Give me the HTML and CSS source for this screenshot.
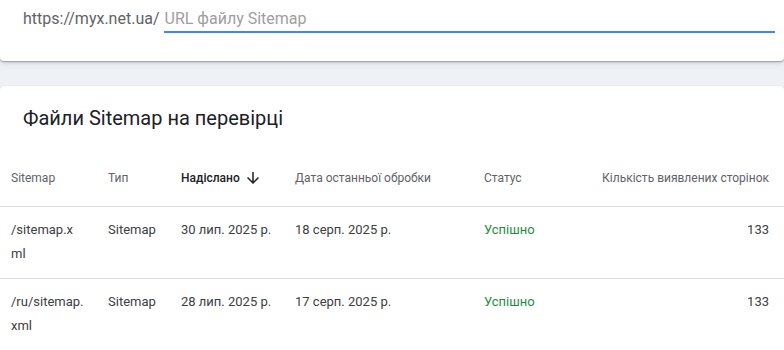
FILE: index.html
```html
<!DOCTYPE html>
<html lang="uk">
<head>
<meta charset="utf-8">
<link rel="stylesheet" href="styles.css">
</head>
<body>
<div class="top-card">
  <div class="url-row">
    <span class="prefix">https://myx.net.ua/</span>
    <div class="input-wrap"><span class="placeholder">URL файлу Sitemap</span></div>
  </div>
</div>
<div class="gap"></div>
<div class="list-card">
  <h2 class="title">Файли Sitemap на перевірці</h2>
  <table class="tbl">
    <colgroup>
      <col class="c1"><col class="c2"><col class="c3"><col class="c4"><col class="c5"><col class="c6">
    </colgroup>
    <thead>
      <tr>
        <th>Sitemap</th>
        <th>Тип</th>
        <th class="sorted"><span class="sort">Надіслано <svg class="arrow" viewBox="0 0 24 24" width="18" height="18"><path d="M20 12l-1.41-1.41L13 16.17V4h-2v12.17l-5.58-5.59L4 12l8 8 8-8z" fill="#202124"/></svg></span></th>
        <th>Дата останньої обробки</th>
        <th>Статус</th>
        <th class="num">Кількість виявлених сторінок</th>
      </tr>
    </thead>
    <tbody>
      <tr>
        <td class="path">/sitemap.xml</td>
        <td>Sitemap</td>
        <td>30 лип. 2025 р.</td>
        <td>18 серп. 2025 р.</td>
        <td class="ok">Успішно</td>
        <td class="num">133</td>
      </tr>
      <tr>
        <td class="path">/ru/sitemap.xml</td>
        <td>Sitemap</td>
        <td>28 лип. 2025 р.</td>
        <td>17 серп. 2025 р.</td>
        <td class="ok">Успішно</td>
        <td class="num">133</td>
      </tr>
    </tbody>
  </table>
</div>
</body>
</html>
```
FILE: styles.css
```css
html, body {
  margin: 0;
  padding: 0;
  background: #eef1f5;
  font-family: Roboto, "Noto Sans", Arial, sans-serif;
}
.top-card {
  background: #fff;
  height: 61px;
  border-radius: 0 0 4px 4px;
  box-shadow: 0 1px 2px rgba(60,64,67,.45), 0 2px 6px rgba(60,64,67,.15);
  position: relative;
  z-index: 1;
}
.url-row {
  display: flex;
  align-items: flex-start;
  padding: 8px 9px 0 23px;
}
.prefix {
  font-size: 16px;
  line-height: 22px;
  color: #5f6368;
  margin-right: 4px;
}
.input-wrap {
  flex: 1;
  height: 23px;
  border-bottom: 2px solid #4285f4;
}
.placeholder {
  font-size: 16px;
  line-height: 22px;
  color: #9e9e9e;
  padding-left: 1px;
}
.gap {
  height: 25px;
}
.list-card {
  background: #fff;
  border-radius: 4px 4px 0 0;
  box-shadow: 0 0 1px rgba(60,64,67,.25);
  padding-top: 16px;
  min-height: 264px;
}
.title {
  margin: 0 0 16px 23px;
  font-size: 20px;
  line-height: 32px;
  font-weight: 400;
  color: #202124;
}
.tbl {
  width: 100%;
  border-collapse: collapse;
  table-layout: fixed;
}
.c1 { width: 97px; }
.c2 { width: 73px; }
.c3 { width: 114px; }
.c4 { width: 189px; }
.c5 { width: 117px; }
.tbl th {
  height: 56px;
  padding: 0 11px;
  text-align: left;
  font-size: 12px;
  font-weight: 400;
  color: #5f6368;
  border-bottom: 1px solid #e0e0e0;
  white-space: nowrap;
  vertical-align: middle;
}
.tbl th.sorted {
  color: #202124;
  font-weight: 500;
}
.sort {
  display: inline-flex;
  align-items: center;
  gap: 4px;
}
.arrow {
  display: block;
}
.tbl td {
  padding: 11px 11px 12px;
  font-size: 13px;
  line-height: 24px;
  color: #3c4043;
  vertical-align: top;
  border-bottom: 1px solid #e0e0e0;
  word-break: break-all;
}
.tbl td.path {
  padding-right: 13px;
}
.tbl .num {
  text-align: right;
  padding-right: 15px;
}
.tbl td.ok {
  color: #1e8e3e;
}
```
